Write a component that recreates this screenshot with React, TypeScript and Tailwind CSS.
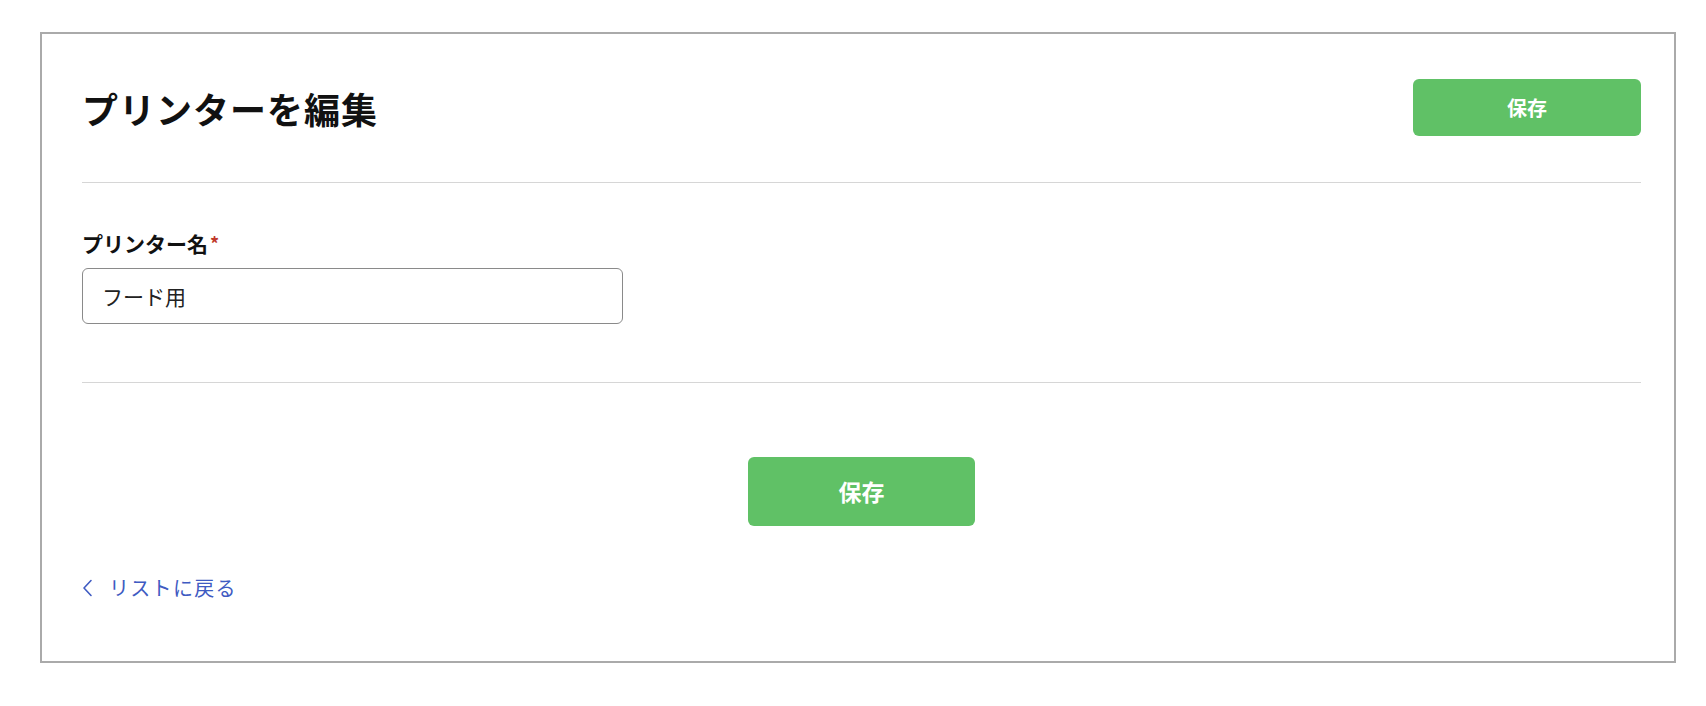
import React, { useState } from 'react';

const font = { fontFamily: '"Noto Sans CJK JP", "Noto Sans", sans-serif' };

const App: React.FC = () => {
  const [name, setName] = useState('フード用');

  return (
    <div className="min-h-screen bg-white pt-[32px] pl-[40px]" style={font}>
      {/* Card */}
      <div className="w-[1636px] border-2 border-[#aaaaaa] bg-white pl-[40px] pr-[33px]">
        {/* Header */}
        <div className="flex items-center justify-between pt-[45px]">
          <h1 className="text-[36px] leading-[44px] font-bold text-[#111111] tracking-[1px]">
            プリンターを編集
          </h1>
          <button className="w-[228px] h-[57px] rounded-[6px] bg-[#60c166] text-white text-[20px] font-semibold">
            保存
          </button>
        </div>

        <div className="mt-[46px] h-px bg-[#d6d6d6]" />

        {/* Form */}
        <div className="pt-[48px]">
          <label className="flex items-start text-[21px] leading-[24px] font-bold text-[#111111]">
            プリンター名
            <span className="ml-[2px] mt-[2px] text-[18px] leading-[20px] text-[#c0392b]">*</span>
          </label>
          <input
            value={name}
            onChange={(e) => setName(e.target.value)}
            className="mt-[13px] block w-[541px] h-[56px] rounded-[6px] border border-[#8a8a8a] px-[19px] text-[21px] text-[#222222] outline-none"
          />
        </div>

        <div className="mt-[58px] h-px bg-[#d6d6d6]" />

        {/* Footer actions */}
        <div className="flex justify-center pt-[74px]">
          <button className="w-[227px] h-[69px] rounded-[6px] bg-[#60c166] text-white text-[23px] font-semibold">
            保存
          </button>
        </div>

        <div className="pt-[50px] pb-[61px]">
          <a href="#" className="flex items-center gap-[16px] text-[20px] leading-[24px] text-[#3f5bc2]">
            <svg width="11" height="18" viewBox="0 0 11 18" fill="none">
              <polyline points="9,1.5 2,9 9,16.5" stroke="#3f5bc2" strokeWidth="1.6" strokeLinecap="round" strokeLinejoin="round" />
            </svg>
            <span className="tracking-[1.3px]">リストに戻る</span>
          </a>
        </div>
      </div>
    </div>
  );
};

export default App;
